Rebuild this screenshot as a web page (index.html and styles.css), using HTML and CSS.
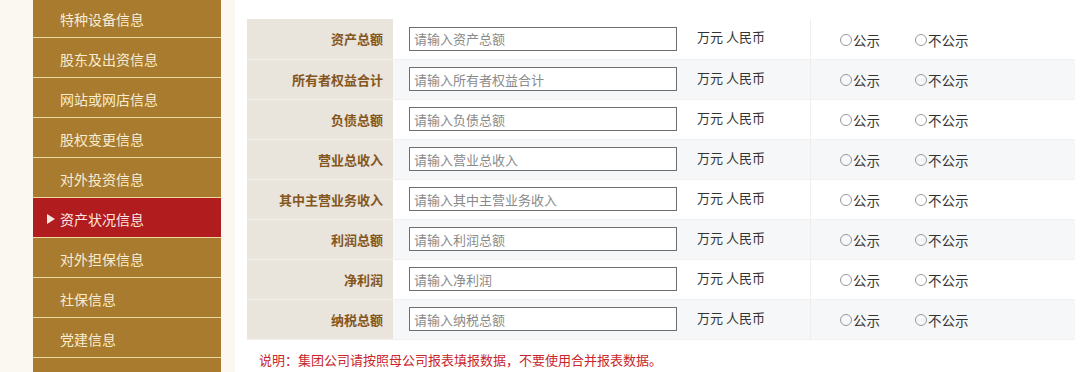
FILE: index.html
```html
<!DOCTYPE html>
<html lang="zh-CN">
<head>
    <meta charset="UTF-8">
    <title>资产状况信息</title>
    <link rel="stylesheet" href="styles.css">
</head>
<body>
    <div class="page">
        <ul class="side-nav">
            <li>特种设备信息</li>
            <li>股东及出资信息</li>
            <li>网站或网店信息</li>
            <li>股权变更信息</li>
            <li>对外投资信息</li>
            <li class="active">资产状况信息</li>
            <li>对外担保信息</li>
            <li>社保信息</li>
            <li>党建信息</li>
            <li></li>
        </ul>

        <div class="main">
            <table class="asset-table">
                <tr>
                    <th>资产总额</th>
                    <td class="input-cell"><input type="text" placeholder="请输入资产总额"></td>
                    <td class="unit">万元 人民币</td>
                    <td class="choice"><span class="radio">公示</span><span class="radio">不公示</span></td>
                </tr>
                <tr>
                    <th>所有者权益合计</th>
                    <td class="input-cell"><input type="text" placeholder="请输入所有者权益合计"></td>
                    <td class="unit">万元 人民币</td>
                    <td class="choice"><span class="radio">公示</span><span class="radio">不公示</span></td>
                </tr>
                <tr>
                    <th>负债总额</th>
                    <td class="input-cell"><input type="text" placeholder="请输入负债总额"></td>
                    <td class="unit">万元 人民币</td>
                    <td class="choice"><span class="radio">公示</span><span class="radio">不公示</span></td>
                </tr>
                <tr>
                    <th>营业总收入</th>
                    <td class="input-cell"><input type="text" placeholder="请输入营业总收入"></td>
                    <td class="unit">万元 人民币</td>
                    <td class="choice"><span class="radio">公示</span><span class="radio">不公示</span></td>
                </tr>
                <tr>
                    <th>其中主营业务收入</th>
                    <td class="input-cell"><input type="text" placeholder="请输入其中主营业务收入"></td>
                    <td class="unit">万元 人民币</td>
                    <td class="choice"><span class="radio">公示</span><span class="radio">不公示</span></td>
                </tr>
                <tr>
                    <th>利润总额</th>
                    <td class="input-cell"><input type="text" placeholder="请输入利润总额"></td>
                    <td class="unit">万元 人民币</td>
                    <td class="choice"><span class="radio">公示</span><span class="radio">不公示</span></td>
                </tr>
                <tr>
                    <th>净利润</th>
                    <td class="input-cell"><input type="text" placeholder="请输入净利润"></td>
                    <td class="unit">万元 人民币</td>
                    <td class="choice"><span class="radio">公示</span><span class="radio">不公示</span></td>
                </tr>
                <tr>
                    <th>纳税总额</th>
                    <td class="input-cell"><input type="text" placeholder="请输入纳税总额"></td>
                    <td class="unit">万元 人民币</td>
                    <td class="choice"><span class="radio">公示</span><span class="radio">不公示</span></td>
                </tr>
            </table>
            <p class="note">说明：集团公司请按照母公司报表填报数据，不要使用合并报表数据。</p>
        </div>
    </div>
</body>
</html>
```

FILE: styles.css
```css
body {
    margin: 0;
    background-color: #faf8f1;
    font-family: "Noto Sans CJK SC", "Liberation Sans", sans-serif;
    font-size: 13px;
    color: #333;
    overflow: hidden;
}

.page {
    display: flex;
    align-items: flex-start;
    height: 372px;
    overflow: hidden;
    padding-left: 33px;
}

.side-nav {
    list-style: none;
    margin: -2px 0 0;
    padding: 0;
    width: 188px;
    flex-shrink: 0;
    background-color: #a87b2e;
}

.side-nav li {
    height: 39px;
    line-height: 42px;
    overflow: hidden;
    padding-left: 27px;
    border-bottom: 1px solid #efd89c;
    color: #f8edd2;
    font-size: 14px;
    position: relative;
}

.side-nav li.active {
    background-color: #b11d1f;
    color: #fde9e3;
}

.side-nav li.active::before {
    content: "";
    position: absolute;
    left: 14px;
    top: 16px;
    border-left: 8px solid #fbe8e0;
    border-top: 5px solid transparent;
    border-bottom: 5px solid transparent;
}

.main {
    box-sizing: border-box;
    flex: 1;
    height: 372px;
    margin-left: 14px;
    padding: 19px 5px 0 12px;
    background-color: #fff;
}

.asset-table {
    width: 828px;
    border-collapse: collapse;
}

.asset-table tr {
    height: 40px;
    border-bottom: 1px solid #f0f0f0;
}

.asset-table tr:nth-child(even) td {
    background-color: #f6f7f9;
}

.asset-table th {
    width: 136px;
    padding: 0 10px 0 0;
    text-align: right;
    background-color: #e9e4dc;
    color: #84561c;
    font-weight: bold;
    font-size: 13px;
    border-bottom: 1px solid #f4f1ec;
}

.input-cell {
    width: 278px;
    padding: 0 0 0 16px;
}

.input-cell input {
    box-sizing: border-box;
    width: 268px;
    height: 24px;
    padding: 0 4px;
    border: 1px solid #6f6f6f;
    border-radius: 0;
    font-family: inherit;
    font-size: 13px;
    background: #fff;
}

.input-cell input::placeholder {
    color: #8a8a8a;
}

.unit {
    width: 113px;
    padding: 0 0 4px 10px;
    border-right: 1px solid #eeeeee;
    color: #333;
}

.choice {
    padding: 2px 0 0 29px;
}

.radio {
    display: inline-flex;
    align-items: center;
    margin-right: 35px;
    color: #333;
    font-size: 13.5px;
}

.radio::before {
    content: "";
    width: 10px;
    height: 10px;
    border: 1px solid #999;
    border-radius: 50%;
    margin-right: 1px;
}

.note {
    margin: 10px 0 0 12px;
    color: #c8262b;
    font-size: 13px;
}
```
